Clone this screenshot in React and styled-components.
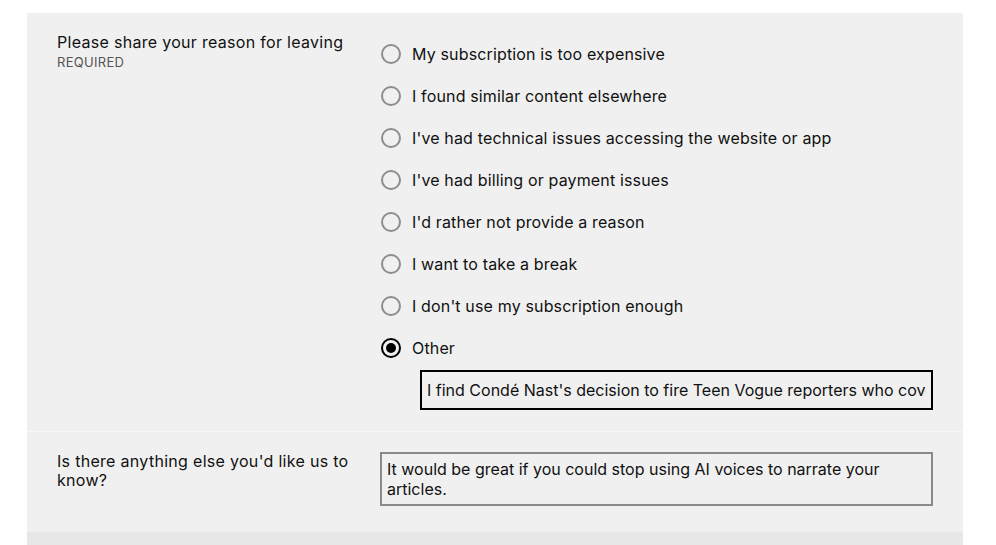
import React, { useEffect, useRef } from "react";
import styled, { createGlobalStyle } from "styled-components";

const Global = createGlobalStyle`
  html, body { margin: 0; padding: 0; background: #ffffff; }
  body { font-family: Inter, "Noto Sans", sans-serif; color: #111; }
  * { box-sizing: border-box; }
`;

const Page = styled.div`
  padding: 13px 33px 0 27px;
  height: 545px;
  overflow: hidden;
`;

const Panel = styled.div`
  width: 936px;
  background: #f0f0f0;
`;

const Section = styled.div`
  display: grid;
  grid-template-columns: 294px 552px;
  column-gap: 30px;
  padding: ${(p) => p.$pad};
  border-bottom: 1px solid ${(p) => (p.$divider ? "#f7f7f7" : "transparent")};
`;

const LabelBox = styled.div`
  display: flex;
  flex-direction: column;
`;

const Question = styled.div`
  font-size: 16px;
  line-height: 19px;
  color: #111;
  letter-spacing: 0.3px;
`;

const Required = styled.div`
  font-size: 13px;
  line-height: 20px;
  color: #555;
  letter-spacing: 0.3px;
  text-transform: uppercase;
`;

const Options = styled.div`
  display: flex;
  flex-direction: column;
`;

const Option = styled.label`
  display: flex;
  align-items: center;
  height: 42px;
  gap: 11px;
  font-size: 16px;
  letter-spacing: 0.15px;
  color: #111;
  cursor: pointer;
`;

const Circle = styled.span`
  width: 20px;
  height: 20px;
  border-radius: 50%;
  border: 2px solid ${(p) => (p.$checked ? "#000" : "#8d8d8d")};
  display: flex;
  align-items: center;
  justify-content: center;
  flex: none;
  &::after {
    content: "";
    width: 10px;
    height: 10px;
    border-radius: 50%;
    background: #000;
    display: ${(p) => (p.$checked ? "block" : "none")};
  }
`;

const OtherInput = styled.input`
  margin: 1px 0 0 39px;
  width: 513px;
  height: 40px;
  border: 2px solid #000;
  background: #f0f0f0;
  padding: 0 5px;
  font-family: Inter, sans-serif;
  font-size: 16px;
  color: #111;
  outline: none;
  border-radius: 0;
`;

const Comments = styled.textarea`
  width: 553px;
  margin-left: -1px;
  height: 54px;
  border: 2px solid #8a8a8a;
  background: #f0f0f0;
  padding: 5px 5px;
  font-family: Inter, sans-serif;
  font-size: 16px;
  line-height: 20px;
  color: #111;
  resize: none;
  outline: none;
  border-radius: 0;
  overflow: hidden;
  caret-color: #000;
`;

const Band = styled.div`
  height: 20px;
  background: #e7e7e7;
`;

const reasons = [
  "My subscription is too expensive",
  "I found similar content elsewhere",
  "I've had technical issues accessing the website or app",
  "I've had billing or payment issues",
  "I'd rather not provide a reason",
  "I want to take a break",
  "I don't use my subscription enough",
  "Other",
];

export default function App() {
  const ref = useRef(null);
  useEffect(() => {
    const el = ref.current;
    if (el) {
      el.focus();
      const n = el.value.length;
      el.setSelectionRange(n, n);
    }
  }, []);
  return (
    <>
      <Global />
      <Page>
        <Panel>
          <Section $pad="20px 30px 21px 30px" $divider>
            <LabelBox>
              <Question>Please share your reason for leaving</Question>
              <Required>Required</Required>
            </LabelBox>
            <Options>
              {reasons.map((r) => (
                <Option key={r}>
                  <Circle $checked={r === "Other"} />
                  {r}
                </Option>
              ))}
              <OtherInput
                readOnly
                value="I find Condé Nast's decision to fire Teen Vogue reporters who covered the news unacceptable."
              />
            </Options>
          </Section>
          <Section $pad="20px 30px 25px 30px">
            <LabelBox>
              <Question>Is there anything else you'd like us to know?</Question>
            </LabelBox>
            <Comments
              ref={ref}
              defaultValue="It would be great if you could stop using AI voices to narrate your articles."
            />
          </Section>
          <Band />
        </Panel>
      </Page>
    </>
  );
}
